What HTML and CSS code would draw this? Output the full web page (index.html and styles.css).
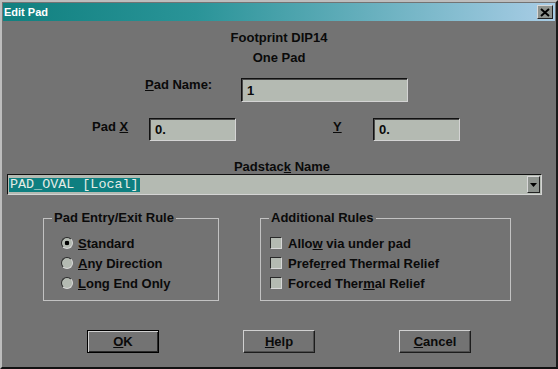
FILE: index.html
```html
<!DOCTYPE html>
<html lang="en">
	<head>
		<meta charset="UTF-8" />
		<title>Edit Pad</title>
		<link rel="stylesheet" href="styles.css">
	</head>
	<body>
		<div class="window">
			<div class="titlebar">
				<span class="title">Edit Pad</span>
				<span class="close">
					<svg width="10" height="9" viewBox="0 0 10 9">
						<path d="M1 1 L9 8 M9 1 L1 8" stroke="#000" stroke-width="2" />
					</svg>
				</span>
			</div>

			<div class="heading">
				<div>Footprint DIP14</div>
				<div>One Pad</div>
			</div>

			<div class="row row-name">
				<label class="lbl lbl-name"><u>P</u>ad Name:</label>
				<div class="field field-name">1</div>
			</div>

			<div class="row row-xy">
				<label class="lbl lbl-x">Pad <u>X</u></label>
				<div class="field field-xy">0.</div>
				<label class="lbl lbl-y"><u>Y</u></label>
				<div class="field field-xy">0.</div>
			</div>

			<div class="padstack-label">Padstac<u>k</u> Name</div>
			<div class="combo">
				<span class="combo-sel">PAD_OVAL [Local]</span>
				<span class="combo-btn">
					<svg width="7" height="4" viewBox="0 0 7 4">
						<path d="M0 0 H7 L3.5 4 Z" fill="#000" />
					</svg>
				</span>
			</div>

			<div class="groups">
				<fieldset class="group group-entry">
					<legend>Pad Entry/Exit Rule</legend>
					<div class="opts">
						<div class="opt"><span class="radio on"></span><span><u>S</u>tandard</span></div>
						<div class="opt"><span class="radio"></span><span><u>A</u>ny Direction</span></div>
						<div class="opt"><span class="radio"></span><span><u>L</u>ong End Only</span></div>
					</div>
				</fieldset>
				<fieldset class="group group-rules">
					<legend>Additional Rules</legend>
					<div class="opts">
						<div class="opt"><span class="check"></span><span>Allo<u>w</u> via under pad</span></div>
						<div class="opt"><span class="check"></span><span>Prefe<u>r</u>red Thermal Relief</span></div>
						<div class="opt"><span class="check"></span><span>Forced Ther<u>m</u>al Relief</span></div>
					</div>
				</fieldset>
			</div>

			<div class="buttons">
				<button class="btn default"><u>O</u>K</button>
				<button class="btn"><u>H</u>elp</button>
				<button class="btn"><u>C</u>ancel</button>
			</div>
		</div>
	</body>
</html>
```

FILE: styles.css
```css
body {
	margin: 0;
	background: #737373;
	font-family: "Liberation Sans", Arial, sans-serif;
	font-size: 13px;
	font-weight: bold;
	color: #0a0a0a;
}
.window {
	width: 558px;
	height: 369px;
	box-sizing: border-box;
	border: 2px solid;
	border-color: #bdbdbd #1a1a1a #111 #bdbdbd;
	padding: 1px;
	background: #737373;
}
.titlebar {
	display: flex;
	align-items: center;
	height: 18px;
	padding-left: 1px;
	background: linear-gradient(to right, #10807f 0%, #2a9498 35%, #a9cde6 100%);
	color: #fff;
	font-size: 11px;
}
.close {
	display: flex;
	align-items: center;
	justify-content: center;
	margin-left: auto;
	margin-right: 2px;
	width: 16px;
	height: 14px;
	box-sizing: border-box;
	background: #8e938e;
	border: 1px solid;
	border-color: #d8d8d8 #222 #222 #d8d8d8;
}
.heading {
	margin-top: 7px;
	text-align: center;
	line-height: 20px;
}
.row {
	display: flex;
	align-items: flex-start;
}
.lbl {
	line-height: 16px;
}
.field {
	box-sizing: border-box;
	background: #b4bab2;
	border: 1px solid;
	border-color: #111 #d4d4d4 #d4d4d4 #111;
	box-shadow: inset 1px 1px 0 #4a4a4a;
	padding-left: 5px;
	display: flex;
	align-items: center;
}
.row-name {
	margin-top: 10px;
	padding-left: 142px;
}
.lbl-name {
	width: 96px;
	margin-top: -1px;
}
.field-name {
	width: 167px;
	height: 24px;
}
.row-xy {
	margin-top: 16px;
	padding-left: 89px;
}
.lbl-x {
	width: 57px;
	margin-top: 1px;
}
.lbl-y {
	width: 40px;
	margin-left: 97px;
	margin-top: 1px;
}
.field-xy {
	width: 87px;
	height: 23px;
}
.padstack-label {
	margin-top: 18px;
	line-height: 15px;
	text-align: center;
	padding-left: 6px;
}
.combo {
	display: flex;
	align-items: center;
	height: 21px;
	box-sizing: border-box;
	margin: 0 13px 0 4px;
	background: #b4bab2;
	border: 1px solid;
	border-color: #111 #d4d4d4 #d4d4d4 #111;
	padding: 0 1px;
}
.combo-sel {
	background: #0e7f80;
	color: #e6ece6;
	font-family: "Liberation Mono", "Courier New", monospace;
	font-weight: normal;
	font-size: 13.4px;
	line-height: 14px;
	padding: 0 1px;
}
.combo-btn {
	display: flex;
	align-items: center;
	justify-content: center;
	margin-left: auto;
	width: 13px;
	height: 17px;
	box-sizing: border-box;
	background: #8e938e;
	border: 1px solid;
	border-color: #d8d8d8 #222 #222 #d8d8d8;
}
.groups {
	display: flex;
	margin-top: 16px;
}
.group {
	margin: 0;
	min-width: 0;
	box-sizing: border-box;
	border: 1px solid #c2c2c2;
	padding: 0;
}
.group legend {
	margin-left: 8px;
	padding: 0 2px;
	line-height: 14px;
}
.opts {
	padding: 8px 0 7px 0;
}
.group-entry {
	margin-left: 40px;
	width: 176px;
}
.group-entry .opts {
	padding-left: 17px;
}
.group-rules {
	margin-left: 41px;
	width: 251px;
}
.group-rules .opts {
	padding-left: 9px;
}
.opt {
	display: flex;
	align-items: center;
	height: 20px;
}
.radio {
	width: 12px;
	height: 12px;
	box-sizing: border-box;
	border-radius: 50%;
	margin-right: 5px;
	background: #b4bab2;
	border: 1px solid;
	border-color: #2a2a2a #d8d8d8 #d8d8d8 #2a2a2a;
}
.radio.on {
	background: radial-gradient(circle, #000 0 2px, #b4bab2 2.6px);
}
.check {
	width: 12px;
	height: 12px;
	box-sizing: border-box;
	margin-right: 6px;
	background: #b4bab2;
	border: 1px solid;
	border-color: #2a2a2a #d8d8d8 #d8d8d8 #2a2a2a;
}
.buttons {
	display: flex;
	justify-content: center;
	gap: 84px;
	margin-top: 29px;
}
.btn {
	width: 72px;
	height: 23px;
	box-sizing: border-box;
	background: #737373;
	font: inherit;
	color: inherit;
	border: 1px solid;
	border-color: #d0d0d0 #1c1c1c #1c1c1c #d0d0d0;
	box-shadow: inset -1px -1px 0 #4e4e4e;
	padding: 0;
}
.btn.default {
	border-color: #000;
	box-shadow: inset 1px 1px 0 #d0d0d0, inset -1px -1px 0 #2a2a2a;
}
```
